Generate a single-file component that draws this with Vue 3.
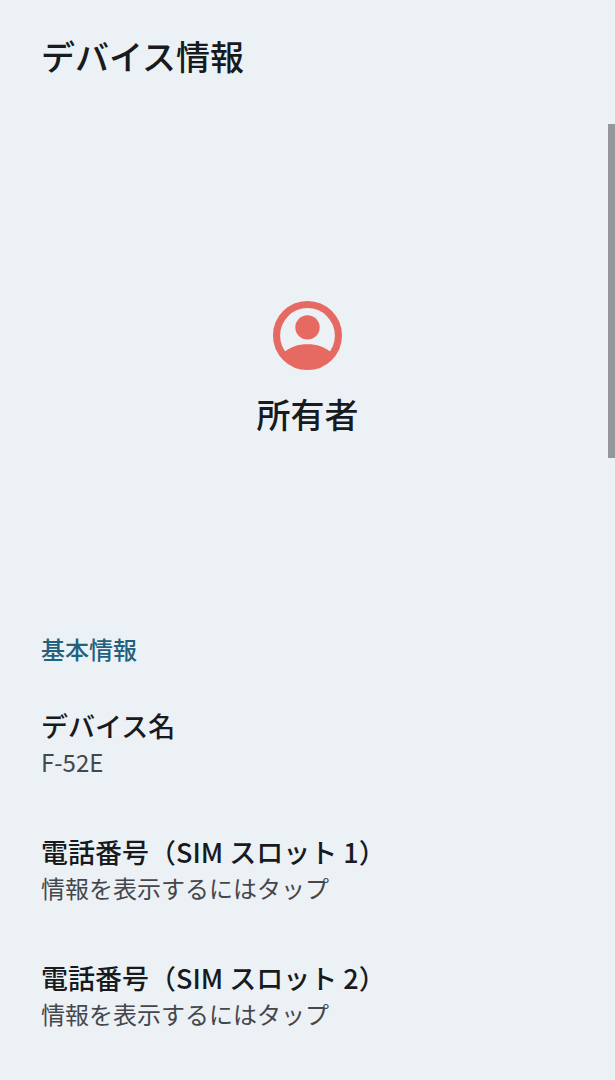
<script setup>
const items = [
  { title: 'デバイス名', summary: 'F-52E' },
  { title: '電話番号（SIM スロット 1）', summary: '情報を表示するにはタップ' },
  { title: '電話番号（SIM スロット 2）', summary: '情報を表示するにはタップ' },
]
</script>

<template>
  <main class="page">
    <h1 class="title">デバイス情報</h1>
    <section class="owner">
      <svg class="avatar" viewBox="0 0 68 68" aria-hidden="true">
        <defs>
          <clipPath id="avatar-clip"><circle cx="34" cy="34" r="32" /></clipPath>
        </defs>
        <circle cx="34" cy="34" r="30.5" fill="none" stroke="#e66a62" stroke-width="7" />
        <circle cx="34" cy="26" r="12" fill="#e66a62" />
        <path d="M10 51C17 45 25 42.500 34 42.500S51 45 58 51V68H10Z" fill="#e66a62" clip-path="url(#avatar-clip)" />
      </svg>
      <p class="name">所有者</p>
    </section>
    <section>
      <h2 class="category">基本情報</h2>
      <ul class="list">
        <li v-for="item in items" :key="item.title">
          <button class="item" type="button">
            <span class="item-title">{{ item.title }}</span>
            <span class="item-summary">{{ item.summary }}</span>
          </button>
        </li>
      </ul>
    </section>
    <div class="scrollbar"></div>
  </main>
</template>

<style>
body {
  margin: 0;
  background: #ecf1f5;
}
</style>

<style scoped>
.page {
  position: relative;
  box-sizing: border-box;
  min-height: 100vh;
  padding: 32px 41px 0;
  background: #ecf1f5;
  color: #171a1e;
  font-family: "Noto Sans CJK JP", sans-serif;
}
.title,
.name {
  margin: 0;
  font-size: 34px;
  line-height: 48px;
  font-weight: 500;
}
.owner {
  display: flex;
  flex-direction: column;
  align-items: center;
  gap: 20px;
  padding: 221px 0 193px;
}
.avatar {
  display: block;
  width: 69px;
  height: 69px;
}
.category {
  margin: 0 0 40px;
  color: #23617f;
  font-size: 24px;
  line-height: 36px;
  font-weight: 500;
}
.list {
  margin: 0;
  padding: 0;
  list-style: none;
  display: grid;
  gap: 54px;
}
.item {
  display: block;
  width: 100%;
  padding: 0;
  border: 0;
  background: none;
  color: inherit;
  font: inherit;
  text-align: left;
}
.item-title,
.item-summary {
  display: block;
}
.item-title {
  font-size: 27px;
  line-height: 38px;
  font-weight: 500;
}
.item-summary {
  color: #44474c;
  font-size: 24px;
  line-height: 34px;
}
.scrollbar {
  position: absolute;
  top: 124px;
  right: 0;
  width: 7px;
  height: 334px;
  background: #94989c;
}
</style>
